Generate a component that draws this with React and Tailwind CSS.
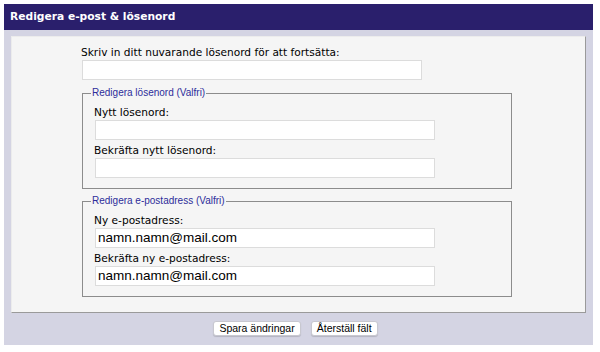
import React from 'react';

const labelFont = { fontFamily: '"DejaVu Sans", Verdana, sans-serif' };

const Field = ({ label, value, className = '' }) => (
  <div className={className}>
    <div className="text-[10.6px] leading-[12px] text-black whitespace-nowrap" style={labelFont}>{label}</div>
    <div className="mt-[2px] ml-[1px] w-[340px] h-[20px] bg-white border border-[#dcdcdc] flex items-center px-[2px]">
      {value && (
        <span className="text-[13.5px] text-black font-['Liberation_Sans',Arial,sans-serif]">{value}</span>
      )}
    </div>
  </div>
);

const Group = ({ legend, children, className = '' }) => (
  <fieldset className={`w-[430px] border border-[#8c8c8c] pl-[11px] pr-[8px] pb-[10px] pt-[7px] ${className}`}>
    <legend className="ml-[-3px] px-[1px] text-[10px] leading-[12px] text-[#2d2d9a] font-['Liberation_Sans',Arial,sans-serif]">
      {legend}
    </legend>
    {children}
  </fieldset>
);

const Button = ({ children }) => (
  <button className="h-[15px] px-[5px] bg-white rounded-[3px] border border-[#c8c8d0] shadow-[0_1px_1px_rgba(0,0,0,0.15)] text-[10.5px] leading-[13px] text-black font-['Liberation_Sans',Arial,sans-serif]">
    {children}
  </button>
);

export default function App() {
  return (
    <div className="w-[600px] h-[352px] bg-white pt-[4px] pl-[4px]">
      <div className="w-[589px]">
        <div className="h-[26px] bg-[#2a1f6c] flex items-center px-[6px]">
          <span className="text-white font-bold text-[10.7px]" style={labelFont}>Redigera e-post &amp; lösenord</span>
        </div>
        <div className="bg-[#d4d4e3] pt-[6px] px-[7px] h-[315px]">
          <div className="h-[277px] bg-[#f5f5f5] border border-t-[#ececec] border-l-[#ececec] border-r-[#9a9a9a] border-b-[#9a9a9a] pt-[9px]">
            <div className="w-[432px] ml-[69px]">
              <Field label="Skriv in ditt nuvarande lösenord för att fortsätta:" />
              <Group legend="Redigera lösenord (Valfri)" className="mt-[7px] ml-[1px]">
                <Field label="Nytt lösenord:" />
                <Field label="Bekräfta nytt lösenord:" className="mt-[4px]" />
              </Group>
              <Group legend="Redigera e-postadress (Valfri)" className="mt-[6px] ml-[1px]">
                <Field label="Ny e-postadress:" value="namn.namn@mail.com" />
                <Field label="Bekräfta ny e-postadress:" value="namn.namn@mail.com" className="mt-[4px]" />
              </Group>
            </div>
          </div>
          <div className="flex justify-center gap-[10px] mt-[8px] ml-[-6px]">
            <Button>Spara ändringar</Button>
            <Button>Återställ fält</Button>
          </div>
        </div>
      </div>
    </div>
  );
}
